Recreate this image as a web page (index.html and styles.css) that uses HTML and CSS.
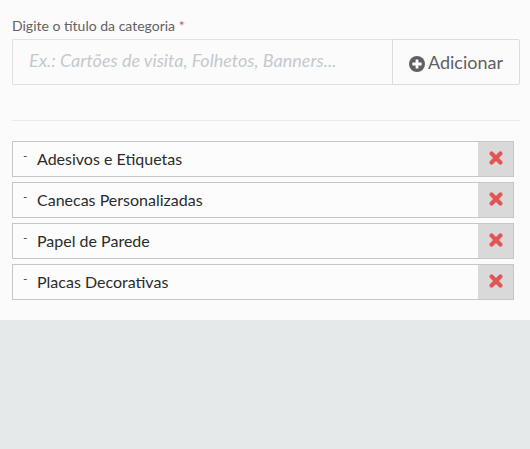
FILE: index.html
```html
<!DOCTYPE html>
<html>
<head>
  <link rel="stylesheet" href="styles.css">
</head>
<body>
  <div class="panel">
    <label class="field-label">Digite o título da categoria <span class="required">*</span></label>
    <div class="input-group">
      <div class="fake-input">Ex.: Cartões de visita, Folhetos, Banners...</div>
      <button class="add-btn">
        <svg class="add-icon" viewBox="0 0 16 16"><circle cx="8" cy="8" r="8" fill="#5f6062"/><path d="M8 3.4v9.2M3.4 8h9.2" stroke="#fff" stroke-width="2.8"/></svg>
        Adicionar
      </button>
    </div>
    <div class="divider"></div>
    <div class="category-list">
      <div class="category">
        <span class="dash">-</span>
        <span class="category-name">Adesivos e Etiquetas</span>
        <span class="remove"><svg class="remove-icon" viewBox="0 0 14 14"><path d="M2.6 2.6l8.8 8.8M11.4 2.6l-8.8 8.8" stroke="#e15554" stroke-width="4.2" stroke-linecap="round"/></svg></span>
      </div>
      <div class="category">
        <span class="dash">-</span>
        <span class="category-name">Canecas Personalizadas</span>
        <span class="remove"><svg class="remove-icon" viewBox="0 0 14 14"><path d="M2.6 2.6l8.8 8.8M11.4 2.6l-8.8 8.8" stroke="#e15554" stroke-width="4.2" stroke-linecap="round"/></svg></span>
      </div>
      <div class="category">
        <span class="dash">-</span>
        <span class="category-name">Papel de Parede</span>
        <span class="remove"><svg class="remove-icon" viewBox="0 0 14 14"><path d="M2.6 2.6l8.8 8.8M11.4 2.6l-8.8 8.8" stroke="#e15554" stroke-width="4.2" stroke-linecap="round"/></svg></span>
      </div>
      <div class="category">
        <span class="dash">-</span>
        <span class="category-name">Placas Decorativas</span>
        <span class="remove"><svg class="remove-icon" viewBox="0 0 14 14"><path d="M2.6 2.6l8.8 8.8M11.4 2.6l-8.8 8.8" stroke="#e15554" stroke-width="4.2" stroke-linecap="round"/></svg></span>
      </div>
    </div>
  </div>
</body>
</html>
```

FILE: styles.css
```css
html, body {
  height: 100%;
}

body {
  margin: 0;
  background: #e6e9e9;
  font-family: 'Lato', sans-serif;
  color: #333333;
}

.panel {
  height: 320px;
  box-sizing: border-box;
  padding: 17px 10px 0 12px;
  background: #fbfbfb;
}

.field-label {
  display: block;
  height: 22px;
  font-size: 14px;
  line-height: 18px;
  color: #626262;
}

.required {
  color: #e15554;
}

.input-group {
  display: flex;
  height: 46px;
}

.fake-input {
  flex: 1;
  box-sizing: border-box;
  padding-left: 16px;
  border: 1px solid #dfe2e5;
  border-right: none;
  border-radius: 2px 0 0 2px;
  font-size: 18px;
  font-style: italic;
  line-height: 40px;
  color: #c3cacd;
}

.add-btn {
  display: flex;
  align-items: center;
  justify-content: center;
  gap: 3px;
  width: 128px;
  padding: 0;
  border: 1px solid #d9dce0;
  border-radius: 0 2px 2px 0;
  background: #fbfbfb;
  font-family: 'Lato', sans-serif;
  font-size: 18px;
  color: #5f6062;
}

.add-icon {
  width: 16px;
  height: 16px;
  margin-top: 3px;
}

.divider {
  height: 1px;
  margin-top: 35px;
  background: #eaeaea;
}

.category-list {
  display: flex;
  flex-direction: column;
  gap: 5px;
  width: 502px;
  margin-top: 20px;
}

.category {
  display: flex;
  align-items: center;
  box-sizing: border-box;
  height: 36px;
  border: 1px solid #c6c6c6;
  background: #fcfcfc;
}

.dash {
  width: 24px;
  padding-left: 10px;
  box-sizing: border-box;
  margin-top: -6px;
  font-size: 12px;
  line-height: 12px;
  color: #444444;
}

.category-name {
  flex: 1;
  margin-top: -2px;
  font-size: 16px;
  color: #2b2b2b;
}

.remove {
  display: flex;
  align-items: center;
  justify-content: center;
  width: 35px;
  height: 100%;
  padding-bottom: 2px;
  box-sizing: border-box;
  background: #d9d9d9;
}

.remove-icon {
  width: 14px;
  height: 14px;
}
```
